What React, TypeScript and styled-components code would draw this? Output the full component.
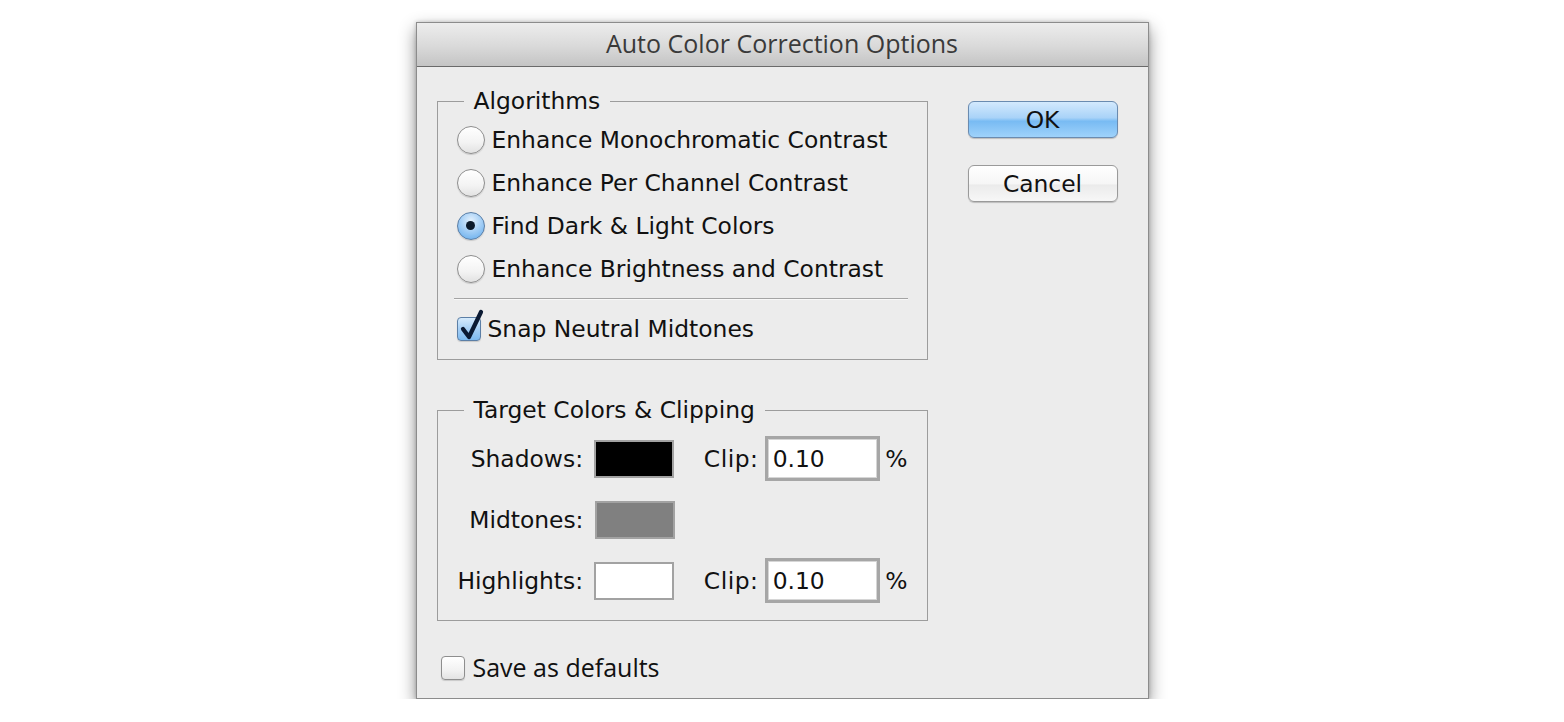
import React from 'react';
import styled, { createGlobalStyle } from 'styled-components';

const GlobalStyle = createGlobalStyle`
  body {
    margin: 0;
    background: #ffffff;
  }
`;

const Page = styled.div`
  display: flex;
  justify-content: center;
  padding-top: 22px;
`;

const Dialog = styled.div`
  width: 733px;
  height: 677px;
  box-sizing: border-box;
  background: #ececec;
  border: 1px solid #8c8c8c;
  box-shadow: 0 7px 16px rgba(0, 0, 0, 0.45), 0 0 4px rgba(0, 0, 0, 0.2);
  display: flex;
  flex-direction: column;
  font-family: 'DejaVu Sans', sans-serif;
  color: #111;
`;

const TitleBar = styled.div`
  height: 44px;
  flex: none;
  display: flex;
  align-items: center;
  justify-content: center;
  background: linear-gradient(#ededed, #d9d9d9 55%, #c4c4c4);
  border-bottom: 1px solid #6a6a6a;
  font-family: 'Open Sans', sans-serif;
  font-size: 25px;
  line-height: 1;
  padding-bottom: 3px;
  box-sizing: border-box;
  color: #3a3a3a;
`;

const Body = styled.div`
  flex: 1;
  display: flex;
  padding: 0 31px 0 20px;
`;

const MainColumn = styled.div`
  width: 491px;
  display: flex;
  flex-direction: column;
`;

const ButtonColumn = styled.div`
  margin-left: 40px;
  padding-top: 34px;
  display: flex;
  flex-direction: column;
  gap: 27px;
`;

const GroupBox = styled.fieldset<{ $top: number; $padBottom: number }>`
  margin: ${(p) => p.$top}px 0 0;
  padding: 0 19px ${(p) => p.$padBottom}px 16px;
  border: 1px solid #9c9c9c;
  box-sizing: border-box;
  width: 100%;
  min-width: 0;
`;

const GroupLegend = styled.legend`
  margin-left: 10px;
  padding: 0 10px;
  font-size: 23.4px;
  line-height: 28px;
`;

const OptionList = styled.div`
  padding-top: 3px;
  display: flex;
  flex-direction: column;
`;

const OptionRow = styled.label`
  height: 43px;
  display: flex;
  align-items: center;
  gap: 7px;
  padding-left: 3px;
  font-size: 23.4px;
`;

const Radio = styled.span<{ $checked?: boolean }>`
  width: 28px;
  height: 28px;
  flex: none;
  box-sizing: border-box;
  border-radius: 50%;
  border: 1px solid ${(p) => (p.$checked ? '#5a7ea6' : '#8e8e8e')};
  background: ${(p) =>
    p.$checked
      ? 'radial-gradient(circle at 50% 30%, #e4f1fd 0%, #a7d0f6 45%, #5ea9ec 100%)'
      : 'linear-gradient(#ffffff, #f3f3f3 60%, #e2e2e2)'};
  box-shadow: 0 1px 1px rgba(0, 0, 0, 0.15);
  display: flex;
  align-items: center;
  justify-content: center;

  &::after {
    content: '';
    display: ${(p) => (p.$checked ? 'block' : 'none')};
    width: 9px;
    height: 9px;
    border-radius: 50%;
    background: #0c1a2b;
  }
`;

const Separator = styled.div`
  height: 0;
  border-top: 1px solid #a4a4a4;
  border-bottom: 1px solid #f8f8f8;
  margin: 8px 0 7px;
`;

const CheckBoxWrap = styled.span<{ $checked?: boolean; $size: number }>`
  position: relative;
  width: ${(p) => p.$size}px;
  height: ${(p) => p.$size}px;
  flex: none;
  box-sizing: border-box;
  border-radius: 4px;
  border: 1px solid ${(p) => (p.$checked ? '#5c7fa6' : '#8e8e8e')};
  background: ${(p) =>
    p.$checked
      ? 'linear-gradient(#d6ebfc, #a6cff5 50%, #7dbaf0)'
      : 'linear-gradient(#ffffff, #f2f2f2 60%, #e3e3e3)'};
  box-shadow: 0 1px 1px rgba(0, 0, 0, 0.15);

  svg {
    position: absolute;
    left: 1px;
    top: -9px;
  }
`;

const CheckBox = ({ checked, size }: { checked?: boolean; size: number }) => (
  <CheckBoxWrap $checked={checked} $size={size}>
    {checked && (
      <svg width="26" height="32" viewBox="0 0 26 32">
        <path
          d="M4 20 L10 28 L22 3"
          fill="none"
          stroke="#0b1a33"
          strokeWidth="4.2"
          strokeLinecap="round"
          strokeLinejoin="round"
        />
      </svg>
    )}
  </CheckBoxWrap>
);

const ColorRows = styled.div`
  padding-top: 12px;
  display: flex;
  flex-direction: column;
  gap: 16px;
`;

const ColorRow = styled.div`
  height: 45px;
  display: flex;
  align-items: center;
  font-size: 23.4px;
`;

const FieldLabel = styled.span`
  width: 130px;
  text-align: right;
  white-space: nowrap;
`;

const Swatch = styled.span<{ $color: string }>`
  margin-left: 11px;
  width: 80px;
  height: 38px;
  box-sizing: border-box;
  background: ${(p) => p.$color};
  border: 2px solid #a2a2a2;
`;

const ClipLabel = styled.span`
  margin-left: 30px;
  width: 58px;
  letter-spacing: 0.5px;
`;

const ClipInput = styled.div`
  margin-left: 3px;
  width: 116px;
  height: 45px;
  box-sizing: border-box;
  border: 3px solid #a6a6a6;
  box-shadow: inset 0 0 0 1px #d6d6d6;
  background: #fff;
  padding-left: 5px;
  display: flex;
  align-items: center;
`;

const Percent = styled.span`
  margin-left: 5px;
`;

const Footer = styled.label`
  margin-top: 34px;
  padding-left: 4px;
  display: flex;
  align-items: center;
  gap: 8px;
  font-family: 'Open Sans', sans-serif;
  font-size: 25px;
  line-height: 1;
`;

const DialogButton = styled.button<{ $primary?: boolean }>`
  width: 150px;
  height: 37px;
  border-radius: 6px;
  border: 1px solid ${(p) => (p.$primary ? '#6a8bb0' : '#9a9a9a')};
  background: ${(p) =>
    p.$primary
      ? 'linear-gradient(#d3e9fd, #a9d3f8 45%, #78bbf3 55%, #9fd2fb)'
      : 'linear-gradient(#ffffff, #f6f6f6 50%, #ebebeb 55%, #f7f7f7)'};
  box-shadow: 0 1px 1px rgba(0, 0, 0, 0.2);
  font-family: 'DejaVu Sans', sans-serif;
  font-size: 23.4px;
  color: #111;
  padding: 0;
`;

const algorithms = [
  'Enhance Monochromatic Contrast',
  'Enhance Per Channel Contrast',
  'Find Dark & Light Colors',
  'Enhance Brightness and Contrast',
];

const App = () => {
  return (
    <Page>
      <GlobalStyle />
      <Dialog>
        <TitleBar>Auto Color Correction Options</TitleBar>
        <Body>
          <MainColumn>
            <GroupBox $top={20} $padBottom={9}>
              <GroupLegend>Algorithms</GroupLegend>
              <OptionList>
                {algorithms.map((name, i) => (
                  <OptionRow key={name}>
                    <Radio $checked={i === 2} />
                    {name}
                  </OptionRow>
                ))}
                <Separator />
                <OptionRow>
                  <CheckBox checked size={24} />
                  Snap Neutral Midtones
                </OptionRow>
              </OptionList>
            </GroupBox>

            <GroupBox $top={36} $padBottom={17}>
              <GroupLegend>Target Colors &amp; Clipping</GroupLegend>
              <ColorRows>
                <ColorRow>
                  <FieldLabel>Shadows:</FieldLabel>
                  <Swatch $color="#000000" />
                  <ClipLabel>Clip:</ClipLabel>
                  <ClipInput>0.10</ClipInput>
                  <Percent>%</Percent>
                </ColorRow>
                <ColorRow>
                  <FieldLabel>Midtones:</FieldLabel>
                  <Swatch $color="#808080" />
                </ColorRow>
                <ColorRow>
                  <FieldLabel>Highlights:</FieldLabel>
                  <Swatch $color="#ffffff" />
                  <ClipLabel>Clip:</ClipLabel>
                  <ClipInput>0.10</ClipInput>
                  <Percent>%</Percent>
                </ColorRow>
              </ColorRows>
            </GroupBox>

            <Footer>
              <CheckBox size={24} />
              Save as defaults
            </Footer>
          </MainColumn>

          <ButtonColumn>
            <DialogButton $primary>OK</DialogButton>
            <DialogButton>Cancel</DialogButton>
          </ButtonColumn>
        </Body>
      </Dialog>
    </Page>
  );
};

export default App;
